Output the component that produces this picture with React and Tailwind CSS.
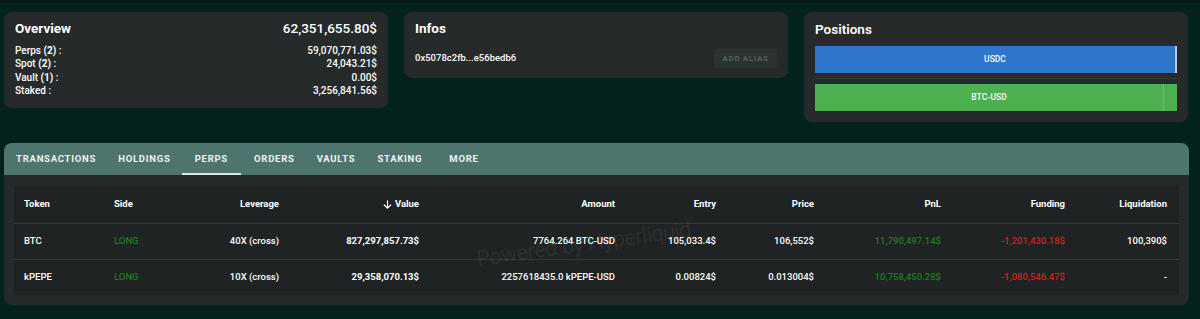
import React from 'react';

const font = { fontFamily: 'Roboto, "Liberation Sans", sans-serif' };

const overviewRows = [
    { label: 'Perps', count: '(2)', value: '59,070,771.03$' },
    { label: 'Spot', count: '(2)', value: '24,043.21$' },
    { label: 'Vault', count: '(1)', value: '0.00$' },
    { label: 'Staked', count: null, value: '3,256,841.56$' },
];

const tabs = ['TRANSACTIONS', 'HOLDINGS', 'PERPS', 'ORDERS', 'VAULTS', 'STAKING', 'MORE'];

const rows = [
    {
        token: 'BTC', side: 'LONG', leverage: '40X (cross)', value: '827,297,857.73$',
        amount: '7764.264 BTC-USD', entry: '105,033.4$', price: '106,552$',
        pnl: '11,790,497.14$', funding: '-1,201,430.18$', liq: '100,390$',
    },
    {
        token: 'kPEPE', side: 'LONG', leverage: '10X (cross)', value: '29,358,070.13$',
        amount: '2257618435.0 kPEPE-USD', entry: '0.00824$', price: '0.013004$',
        pnl: '10,758,450.28$', funding: '-1,080,546.47$', liq: '-',
    },
];

const cols = 'grid grid-cols-[90px_75px_112px_140px_196px_101px_98px_127px_124px_1fr]';

const Card = ({ className, children }) => (
    <div className={`bg-[#262a2a] rounded-[8px] ${className}`}>{children}</div>
);

export default function App() {
    return (
        <div style={font} className="w-[1200px] h-[319px] bg-[#04221d] border-t-[3px] border-[#041814] overflow-hidden text-white">
            {/* Top cards */}
            <div className="flex items-start gap-4 pl-1 pr-3 pt-[9px]">
                <Card className="w-[384px] h-[96px] px-[11px] pt-[7px]">
                    <div className="flex justify-between items-center h-[18px]">
                        <span className="text-[13.5px] font-bold">Overview</span>
                        <span className="text-[13.5px] font-medium">62,351,655.80$</span>
                    </div>
                    <div className="mt-[7px] text-[10px] font-medium leading-[13.3px]">
                        {overviewRows.map((r) => (
                            <div key={r.label} className="flex justify-between">
                                <span>
                                    {r.label} {r.count && <b className="font-bold">{r.count}</b>} :
                                </span>
                                <span>{r.value}</span>
                            </div>
                        ))}
                    </div>
                </Card>

                <Card className="w-[384px] h-[66px] px-[11px] pt-[7px]">
                    <div className="text-[13.5px] font-bold h-[18px] leading-[18px]">Infos</div>
                    <div className="flex justify-between items-center mt-[12px]">
                        <span className="text-[9.5px] font-medium">0x5078c2fb...e56bedb6</span>
                        <button className="w-[63px] h-[19px] rounded-[3px] bg-[#2b3331] text-[#4f635d] text-[8px] font-bold tracking-[0.08em]">
                            ADD ALIAS
                        </button>
                    </div>
                </Card>

                <Card className="w-[384px] h-[110px] px-[11px] pt-[8px]">
                    <div className="text-[13.5px] font-semibold h-[18px] leading-[18px]">Positions</div>
                    <div className="mt-[8px] flex h-[27px]">
                        <div className="flex-1 bg-[#2e75cc] flex items-center justify-center text-[8.5px] font-semibold text-[#eef4fb]">USDC</div>
                        <div className="w-[2px] bg-[#a9ccf0]" />
                    </div>
                    <div className="h-px bg-[#363b3a] mt-[5px]" />
                    <div className="mt-[5px] flex h-[27px]">
                        <div className="flex-1 bg-[#4caf50] flex items-center justify-center text-[8.5px] font-semibold text-[#eef8ee]">BTC-USD</div>
                        <div className="w-px bg-[#6cc06f]" />
                        <div className="w-[13px] bg-[#4caf50]" />
                    </div>
                </Card>
            </div>

            {/* Positions table card */}
            <div className="ml-1 mr-[11px] mt-[21px] bg-[#262a2a] rounded-[8px] overflow-hidden">
                <div className="bg-[#4e746e] h-[32px] flex items-end pl-px">
                    {tabs.map((t) => (
                        <div
                            key={t}
                            className={`h-[32px] flex items-center text-[9.5px] font-bold tracking-[0.08em] text-[#eef3f1] ${t === 'PERPS' ? 'border-b-2 border-[#dde6e3] pt-[2px] px-[13px] mr-[2px]' : 'px-[11px]'} ${t === 'MORE' ? 'ml-[5px]' : ''}`}
                        >
                            {t}
                        </div>
                    ))}
                </div>

                <div className="px-[10px] pt-[11px] pb-[10px]">
                    <div className="relative bg-[#1f2323] text-[9.5px]">
                        <div className={`${cols} h-[38px] items-center font-bold border-b border-[#353a39]`}>
                            <div className="pl-[10px]">Token</div>
                            <div className="pl-[10px]">Side</div>
                            <div className="text-right pr-[12px]">Leverage</div>
                            <div className="pr-[12px] flex justify-end items-center gap-[2px]">
                                <svg width="11" height="11" viewBox="0 0 24 24" fill="none" stroke="currentColor" strokeWidth="2.6" strokeLinecap="round" strokeLinejoin="round">
                                    <path d="M12 4v16M5 13l7 7 7-7" />
                                </svg>
                                Value
                            </div>
                            <div className="text-right pr-[12px]">Amount</div>
                            <div className="text-right pr-[12px]">Entry</div>
                            <div className="text-right pr-[12px]">Price</div>
                            <div className="text-right pr-[12px]">PnL</div>
                            <div className="text-right pr-[12px]">Funding</div>
                            <div className="text-right pr-[12px]">Liquidation</div>
                        </div>
                        {rows.map((r, i) => (
                            <div
                                key={r.token}
                                className={`${cols} h-[35.5px] items-center font-medium ${i === 0 ? 'border-b border-[#353a39]' : ''}`}
                            >
                                <div className="pl-[10px]">{r.token}</div>
                                <div className="pl-[10px] text-[#1f7a1f]">{r.side}</div>
                                <div className="text-right pr-[12px]">{r.leverage}</div>
                                <div className="text-right pr-[12px] font-bold">{r.value}</div>
                                <div className="text-right pr-[12px]">{r.amount}</div>
                                <div className="text-right pr-[12px]">{r.entry}</div>
                                <div className="text-right pr-[12px]">{r.price}</div>
                                <div className="text-right pr-[12px] text-[#1f7a1f]">{r.pnl}</div>
                                <div className="text-right pr-[12px] text-[#d32020]">{r.funding}</div>
                                <div className="text-right pr-[12px]">{r.liq}</div>
                            </div>
                        ))}
                        {/* watermark */}
                        <div className="absolute left-[463px] top-[58px] -rotate-[8deg] origin-left text-[21px] leading-[30px] font-light text-white/[0.07] whitespace-nowrap pointer-events-none">
                            Powered by Hyperliquid
                        </div>
                    </div>
                </div>
            </div>
        </div>
    );
}
